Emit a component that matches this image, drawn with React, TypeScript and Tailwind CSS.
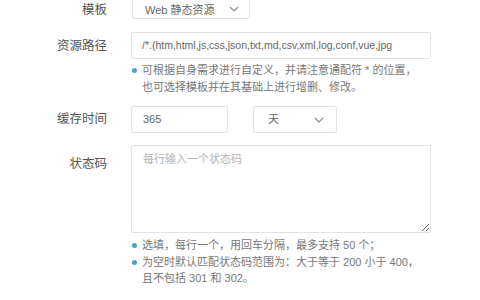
import React from "react";

const Chevron = () => (
  <svg width="10" height="6" viewBox="0 0 10 6" fill="none">
    <polyline points="1,1 5,5 9,1" stroke="#888" strokeWidth="1.2" fill="none" />
  </svg>
);

const Dot = () => <span className="mt-[6px] h-[5px] w-[5px] shrink-0 rounded-full bg-[#4b9fd3]" />;

export default function App() {
  const font = { fontFamily: '"Liberation Sans", "Noto Sans CJK SC", sans-serif' };
  return (
    <div className="h-[300px] w-[480px] overflow-hidden bg-white" style={font}>
      {/* Row 1 */}
      <div className="-mt-[9px] flex items-start">
        <div className="w-[107px] shrink-0 pt-[12px] text-right text-[12.5px] leading-[14px] text-[#555]">模板</div>
        <div className="ml-[25px] flex h-[28px] w-[118px] items-start justify-between rounded-[2px] border border-[#e3e3e3] pl-[12px] pr-[10px] text-[11px] text-[#666]">
          <span className="pt-[11px] leading-[14px]">Web 静态资源</span>
          <span className="pt-[14px]"><Chevron /></span>
        </div>
      </div>
      {/* Row 2 */}
      <div className="mt-[13px] flex items-start">
        <div className="w-[107px] shrink-0 pt-[1px] text-right text-[12.5px] leading-[27px] text-[#555]">资源路径</div>
        <div className="ml-[24px] flex flex-col">
          <div className="flex h-[27px] w-[300px] items-center rounded-[2px] border border-[#e3e3e3] pl-[10px] text-[10.5px] text-[#666]">
            /*.(htm,html,js,css,json,txt,md,csv,xml,log,conf,vue,jpg
          </div>
          <div className="mt-[3px] flex gap-[5px] pl-[1px] text-[11px] leading-[17px] text-[#777]">
            <Dot />
            <div>
              可根据自身需求进行自定义，并请注意通配符 * 的位置，
              <br />
              也可选择模板并在其基础上进行增删、修改。
            </div>
          </div>
        </div>
      </div>
      {/* Row 3 */}
      <div className="mt-[10px] flex items-center">
        <div className="w-[107px] shrink-0 text-right text-[12.5px] leading-[27px] text-[#555]">缓存时间</div>
        <div className="ml-[24px] flex h-[27px] w-[97px] items-center rounded-[2px] border border-[#e3e3e3] pl-[11px] text-[11px] text-[#666]">
          365
        </div>
        <div className="ml-[25px] flex h-[27px] w-[84px] items-center justify-between rounded-[2px] border border-[#e3e3e3] pl-[14px] pr-[12px] text-[11px] text-[#666]">
          <span>天</span>
          <Chevron />
        </div>
      </div>
      {/* Row 4 */}
      <div className="mt-[12px] flex items-start">
        <div className="w-[107px] shrink-0 pt-[9px] text-right text-[12.5px] leading-[20px] text-[#555]">状态码</div>
        <div className="ml-[24px] flex flex-col">
          <textarea
            className="block h-[88px] w-[300px] rounded-[2px] border border-[#e3e3e3] px-[11px] pt-[5px] text-[11px] leading-[16px] text-[#666] outline-none placeholder:text-[#b5b5b5]"
            style={font}
            placeholder="每行输入一个状态码"
          />
          <div className="mt-[4px] flex flex-col text-[11px] leading-[16.5px] text-[#777]">
            <div className="flex gap-[5px] pl-[1px]">
              <Dot />
              <div>选填，每行一个，用回车分隔，最多支持 50 个；</div>
            </div>
            <div className="flex gap-[5px] pl-[1px]">
              <Dot />
              <div>
                为空时默认匹配状态码范围为：大于等于 200 小于 400，
                <br />
                且不包括 301 和 302。
              </div>
            </div>
          </div>
        </div>
      </div>
    </div>
  );
}
